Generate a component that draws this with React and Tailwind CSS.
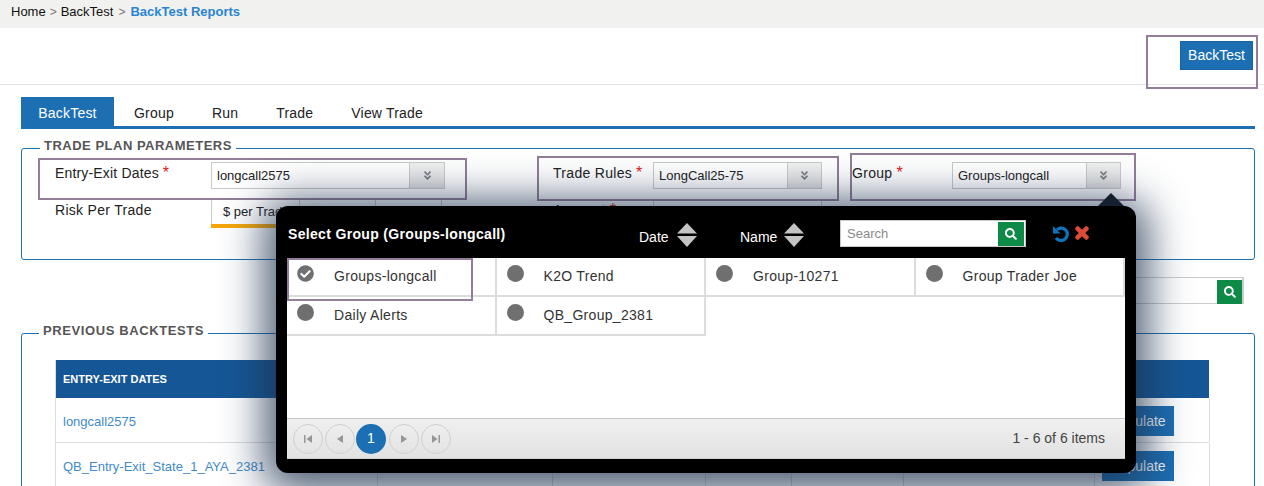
import React from "react";
import { FaSearch, FaTimes, FaCheckCircle, FaAngleDoubleDown } from "react-icons/fa";

const SelectBox = ({ value, w, btn = 34 }) => (
  <div className="flex h-[27px] border border-[#c9c9c9] bg-white text-[13px] tracking-normal text-[#222]" style={{ width: w }}>
    <div className="flex-1 flex items-center pl-[5px] overflow-hidden whitespace-nowrap">{value}</div>
    <div className="flex items-center justify-center border-l border-[#c9c9c9] bg-gradient-to-b from-[#f2f2f2] to-[#dedede]" style={{ width: btn }}>
      <FaAngleDoubleDown className="text-[#7b7f88] text-[11px]" />
    </div>
  </div>
);

const Req = () => <span className="text-[#e8141c] ml-[4px] text-[16px] leading-none">*</span>;

const Sort = () => (
  <svg width="20" height="24" viewBox="0 0 20 24" className="block">
    <polygon points="10,0 20,10.5 0,10.5" fill="#c4c4c4" />
    <polygon points="0,13 20,13 10,24" fill="#c4c4c4" />
  </svg>
);

const UndoIcon = () => (
  <svg width="17" height="17" viewBox="0 0 17 17" className="block text-[#0b76bc]">
    <path d="M5 4.6 A6.2 6.2 0 1 1 4 12.8" fill="none" stroke="currentColor" strokeWidth="3.2" />
    <polygon points="1,1 1,8.5 8.5,8.5" fill="currentColor" />
  </svg>
);

const Tile = ({ label, checked }) => (
  <div className="flex h-[39px] border-r-2 border-b-2 border-[#dcdcdc] pl-[10px] bg-white">
    <div className="w-[37px] pt-[7px] shrink-0">
      {checked ? (
        <FaCheckCircle className="text-[#6f6f6f] w-[17px] h-[17px]" />
      ) : (
        <div className="w-[17px] h-[17px] rounded-full bg-[#6f6f6f]" />
      )}
    </div>
    <span className="text-[14px] text-[#333] pt-[10px] leading-[16px] tracking-[0.3px]">{label}</span>
  </div>
);

const PageBtn = ({ kind }) => (
  <div className="w-[30px] h-[30px] rounded-full border border-[#cfcfcf] flex items-center justify-center">
    <svg width="10" height="10" viewBox="0 0 10 10">
      {kind === "first" && <><rect x="1" y="1" width="1.5" height="8" fill="#9a9494" /><polygon points="9,1 9,9 3.5,5" fill="#9a9494" /></>}
      {kind === "prev" && <polygon points="8,1 8,9 2,5" fill="#9a9494" />}
      {kind === "next" && <polygon points="2,1 2,9 8,5" fill="#9a9494" />}
      {kind === "last" && <><polygon points="1,1 1,9 6.5,5" fill="#9a9494" /><rect x="7.5" y="1" width="1.5" height="8" fill="#9a9494" /></>}
    </svg>
  </div>
);

const Mark = ({ className }) => (
  <div className={"absolute border-2 border-[#937d98] pointer-events-none " + className} />
);

const cols = [322, 175, 153, 86, 112, 191, 115];

const Row = ({ name, h }) => (
  <div className="flex border-b border-[#dcdcdc]" style={{ height: h }}>
    {cols.map((w, i) => (
      <div key={i} className="border-r border-[#dcdcdc] flex items-center shrink-0 pt-[2px]" style={{ width: w }}>
        {i === 0 && <span className="pl-[7px] pt-[2px] text-[#428bca] text-[13px]">{name}</span>}
        {i === 6 && (
          <div className="ml-[7px] w-[72px] h-[30px] bg-[#1c6fb3] text-white text-[14px] flex items-center justify-center">Populate</div>
        )}
      </div>
    ))}
  </div>
);

export default function App() {
  return (
    <div className="relative w-[1264px] h-[486px] overflow-hidden bg-white font-['Liberation_Sans',Arial,sans-serif] text-[#222]">
      {/* breadcrumb */}
      <div className="h-[28px] bg-[#f1f1ef] flex items-center pl-[11px] pb-[4px] text-[13px] text-[#111]">
        <span>Home</span>
        <span className="mx-[4px] text-[#777] text-[12px]">&gt;</span>
        <span>BackTest</span>
        <span className="mx-[5px] text-[#777] text-[12px]">&gt;</span>
        <span className="font-bold text-[#2a84d2]">BackTest Reports</span>
      </div>

      {/* header */}
      <div className="h-[57px] border-b border-[#e5e5e5] flex justify-end pt-[13px] pr-[11px]">
        <div className="w-[73px] h-[29px] bg-[#1c6fb3] border border-[#1a64a3] text-white text-[14px] flex items-center justify-center">BackTest</div>
      </div>

      {/* tabs */}
      <div className="mx-[21px] mr-[9px] mt-[12px] h-[32px] border-b-[3px] border-[#1c6fb3] flex text-[14px] tracking-[0.2px]">
        <div className="w-[93px] pt-[3px] bg-[#1c6fb3] text-white flex items-center justify-center">BackTest</div>
        <div className="ml-[20px] pt-[3px] flex items-center">Group</div>
        <div className="ml-[38px] pt-[3px] flex items-center">Run</div>
        <div className="ml-[38px] pt-[3px] flex items-center">Trade</div>
        <div className="ml-[38px] pt-[3px] flex items-center">View Trade</div>
      </div>

      {/* trade plan parameters */}
      <fieldset className="mx-[21px] mr-[9px] mt-[9px] h-[122px] border border-[#1c6fb3] rounded-[3px] px-[33px]">
        <legend className="ml-[-15px] px-[4px] pb-[5px] text-[13px] leading-[16px] font-bold tracking-[0.5px] text-[#555]">TRADE PLAN PARAMETERS</legend>
        <div className="flex text-[14px] tracking-[0.3px] pt-[3px]">
          <div className="w-[498px]">
            <div className="flex h-[37px]">
              <div className="w-[156px] leading-[20px] pt-[1px] tracking-[0.17px]">Entry-Exit Dates<Req /></div>
              <SelectBox value="longcall2575" w={234} btn={35} />
            </div>
            <div className="flex">
              <div className="w-[156px] leading-[20px] pt-[1px]">Risk Per Trade</div>
              <div className="w-[232px] h-[29px] flex border-b-4 border-[#f5a70a] text-[13px] tracking-normal">
                <div className="w-[88px] border-l border-[#c9c9c9] flex items-center pl-[11px]">$ per Trade</div>
                <div className="w-[76px] border-l border-[#c9c9c9]" />
                <div className="w-[67px] border-x border-[#c9c9c9]" />
              </div>
            </div>
          </div>
          <div className="w-[299px]">
            <div className="flex h-[37px]">
              <div className="w-[100px] leading-[20px] pt-[1px]">Trade Rules<Req /></div>
              <SelectBox value="LongCall25-75" w={169} />
            </div>
            <div className="flex">
              <div className="w-[100px] leading-[20px] pt-[1px]">Account<Req /></div>
              <div className="w-[169px] h-[27px] border border-[#c9c9c9]" />
            </div>
          </div>
          <div className="flex h-[37px]">
            <div className="w-[100px] leading-[20px] pt-[1px]">Group<Req /></div>
            <SelectBox value="Groups-longcall" w={169} />
          </div>
        </div>
      </fieldset>

      {/* search strip */}
      <div className="mt-[17px] h-[27px] flex justify-end pr-[20px]">
        <div className="w-[300px] border border-[#cccccc] border-r-2 flex justify-end items-start pt-[2px] bg-white">
          <div className="w-[25px] h-[24px] bg-[#0c8a46] flex items-center justify-center">
            <FaSearch className="text-white text-[12px]" />
          </div>
        </div>
      </div>

      {/* previous backtests */}
      <fieldset className="mx-[21px] mr-[9px] mt-[19px] h-[302px] border border-[#1c6fb3] rounded-[3px] pl-[33px]">
        <legend className="ml-[-16px] px-[4px] pb-[5px] text-[13px] leading-[16px] font-bold tracking-[0.6px] text-[#555]">PREVIOUS BACKTESTS</legend>
        <div className="mt-[16px] w-[1154px] border-l border-[#dcdcdc]">
          <div className="h-[38px] bg-[#155796] flex items-center pl-[7px] text-white text-[11px] font-bold">ENTRY-EXIT DATES</div>
          <Row name="longcall2575" h={45} />
          <Row name="QB_Entry-Exit_State_1_AYA_2381" h={45} />
        </div>
      </fieldset>

      {/* annotation boxes */}
      <Mark className="left-[1146px] top-[35px] w-[112px] h-[54px]" />
      <Mark className="left-[38px] top-[158px] w-[429px] h-[42px]" />
      <Mark className="left-[537px] top-[156px] w-[302px] h-[45px]" />
      <Mark className="left-[850px] top-[153px] w-[286px] h-[48px]" />

      {/* pointer above the modal */}
      <div className="absolute left-[1097px] top-[193px] w-0 h-0 border-x-[14px] border-x-transparent border-b-[14px] border-b-[#10151c]" />

      {/* modal */}
      <div className="absolute left-[276px] top-[206px] w-[860px] h-[267px] bg-black rounded-[12px] shadow-[0_6px_42px_12px_rgba(30,50,80,0.78)] pl-[11px] pr-[11px] pb-[14px] flex flex-col">
        <div className="h-[52px] flex shrink-0 text-white">
          <div className="w-[352px] pt-[20px] pl-[1px] text-[14px] leading-[16px] font-bold tracking-[0.33px] whitespace-nowrap">Select Group (Groups-longcall)</div>
          <div className="w-[101px] flex pt-[17px] gap-[8px]">
            <span className="text-[14px] leading-[16px] pt-[6px]">Date</span>
            <Sort />
          </div>
          <div className="w-[100px] flex pt-[17px] gap-[7px]">
            <span className="text-[14px] leading-[16px] pt-[6px]">Name</span>
            <Sort />
          </div>
          <div className="mt-[14px] w-[186px] h-[27px] bg-white border border-[#c8c8c8] flex justify-between items-center pl-[6px] pr-[1px]">
            <span className="text-[13px] text-[#8a8a8a]">Search</span>
            <div className="w-[26px] h-[24px] bg-[#0c8a46] flex items-center justify-center">
              <FaSearch className="text-white text-[12px]" />
            </div>
          </div>
          <div className="ml-[26px] mt-[19px] flex gap-[5px]">
            <UndoIcon />
            <FaTimes stroke="currentColor" strokeWidth={40} className="w-[16px] h-[18px] -mt-[1px] text-[#dd4b39]" />
          </div>
        </div>
        <div className="bg-white flex-1 flex flex-col">
          <div className="flex-1 grid grid-cols-4 content-start">
            <Tile label="Groups-longcall" checked />
            <Tile label="K2O Trend" />
            <Tile label="Group-10271" />
            <Tile label="Group Trader Joe" />
            <Tile label="Daily Alerts" />
            <Tile label="QB_Group_2381" />
          </div>
          <div className="h-[41px] border-t border-[#c8c8c8] bg-gradient-to-b from-[#f0f0f0] to-[#e2e2e2] border-b border-b-[#cfcfcf] flex items-center px-[6px] gap-[2px] text-[14px] text-[#444]">
            <PageBtn kind="first" />
            <PageBtn kind="prev" />
            <div className="-ml-[1px] w-[30px] h-[30px] rounded-full bg-[#1c6fb3] text-white flex items-center justify-center">1</div>
            <div className="ml-[1px]"><PageBtn kind="next" /></div>
            <PageBtn kind="last" />
            <span className="ml-auto mr-[14px]">1 - 6 of 6 items</span>
          </div>
        </div>
      </div>

      <Mark className="left-[287px] top-[258px] w-[186px] h-[43px]" />
    </div>
  );
}
